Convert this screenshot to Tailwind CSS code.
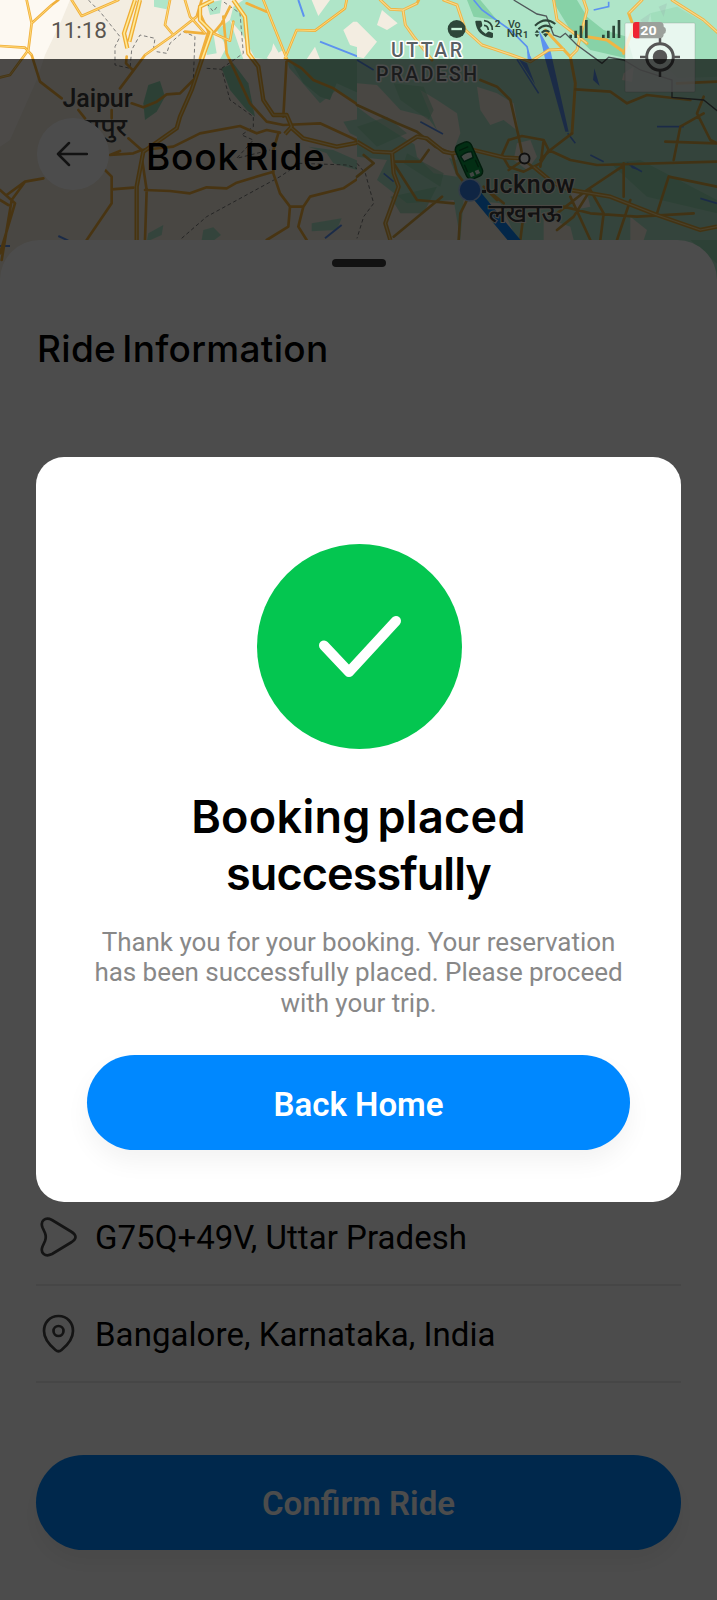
<!DOCTYPE html>
<html lang="en">
<head>
<meta charset="utf-8">
<meta name="viewport" content="width=device-width, initial-scale=1">
<title>Book Ride</title>
<script src="https://cdn.jsdelivr.net/npm/@tailwindcss/browser@4"></script>
</head>
<body class="bg-white">
<div class="relative h-[1600px] w-[717px] overflow-hidden bg-white font-[Roboto,'Noto_Sans',sans-serif] text-black">

  <!-- Map -->
  <svg class="absolute left-0 top-0" width="717" height="290" viewBox="0 0 717 290" fill="none">
    <rect width="717" height="290" fill="#f3ede1"/>
    <!-- western half, drawn at 3x -->
    <g transform="scale(.33333)">
      <path d="M0 0H210L185 60 135 165 110 240 30 420 0 440Z" fill="#fdf9f2"/>
      <g fill="#afe5c8">
        <path d="M462 0H506L500 28 462 20Z"/>
        <path d="M730 0H1100V330L1010 270 960 310 900 240 868 205 850 150 800 178 765 175 725 100 690 60 700 20Z"/>
        <path d="M650 90L690 60 730 178H660L680 140ZM620 10L665 0 660 40 630 45ZM625 120L640 100 650 160 620 165Z"/>
        <path d="M445 255L480 243 495 290 470 335 435 360 430 310Z" fill="#93d8b2"/>
        <path d="M665 205L700 190 745 250 765 350 740 330 690 270Z" fill="#93d8b2"/>
        <path d="M1030 365L1090 355V420L1050 400Z"/>
        <path d="M925 440L1000 450 1090 490V515L1000 490 980 460Z"/>
        <path d="M445 700L490 675 485 705 440 725Z"/><path d="M610 690L640 682 663 705 640 722 605 720Z"/>
        <path d="M935 670L1025 655 1010 690 935 694Z"/>
      </g>
      <path d="M870 180L910 250 960 290 990 300 1010 250 1100 290V180Z" fill="#93d8b2"/>
      <g fill="#f3ede1"><path d="M935 0H990L955 48Z"/><path d="M1030 90L1060 65H1100V150L1050 135Z"/><path d="M820 130L845 175H800L815 150ZM920 178L945 140 960 178Z"/></g>
      <g stroke="#5c92ef" stroke-width="6"><path d="M895 0L912 50M960 125L1080 172M975 715L1025 675M175 708L205 722M0 738H30"/></g>
      <g stroke="#656565" stroke-width="2.5" stroke-dasharray="11 8">
        <path d="M265 0L300 35 360 110 345 140V195L390 205 395 150 420 105 465 115 460 150M470 155L500 160 510 130 550 95 585 110 580 240M620 205L665 208 690 300 760 350V380L725 405 760 420 710 475 810 450M545 715L620 650 840 530 900 490 1040 495 1100 515M665 205L730 160 720 40 670 5M620 10L640 35 655 15"/>
      </g>
      <g stroke="#f0b03c" stroke-width="8" stroke-linejoin="round" stroke-linecap="round">
        <path d="M80 0L95 70 85 150 30 225 0 232M0 138L75 143 95 165 120 245 185 295M235 330L255 355M95 70L155 15 175 0M215 0L245 48 298 25 355 0M510 0L495 75 520 105 590 50 605 0M520 105L435 165 400 212M555 0L570 50 615 100M380 170L378 190 400 212 360 265M580 240L540 280 500 283 470 305 430 322 395 310M600 40L625 95 600 175M555 95L610 100M670 50L680 160 750 310 800 365 850 375M640 100L690 122 700 65M790 0L860 175 850 350M1040 0L1035 25 945 92 890 90 855 175 905 205 940 240 1000 265 1090 325M740 10L800 35M690 20L665 70 640 100M335 330V355M385 415L425 450 400 460 330 465 360 453M425 450L520 440 600 400 720 378 770 400 800 390 840 398M850 375L960 370 1090 430M435 570L510 573 570 580 620 562 680 565 710 548 820 515M425 470L440 570 435 720M315 510L335 530V610L260 720M335 568L400 563M0 570L45 610 0 760M75 545L20 585M130 535L75 545 35 600 5 780M0 600L25 615M820 520L840 580 870 620H910L930 590 1030 565 1090 525M870 620L865 680 800 720M910 620L895 680 920 720M835 400L820 450V520"/>
      </g>
      <g stroke="#efad34" stroke-width="13" stroke-linejoin="round">
        <path d="M405 0L372 100 382 145M420 0L388 125M640 0L600 20V60L635 95 605 180 575 270 540 350 530 385 430 455 410 560V725M700 0L735 50 745 160 775 200 790 300 820 345H860L875 380 855 402M870 380L910 415 1010 440 1090 425"/>
      </g>
      <g stroke="#ffea98" stroke-width="5" stroke-linejoin="round">
        <path d="M405 0L372 100 382 145M420 0L388 125M640 0L600 20V60L635 95 605 180M700 0L735 50 745 160 760 180"/>
      </g>
      <g stroke="#f8d88c" stroke-width="3.5" stroke-linejoin="round">
        <path d="M605 180L575 270 540 350 530 385 430 455 410 560V725M760 180L775 200 790 300 820 345H860L875 380 855 402M870 380L910 415 1010 440 1090 425"/>
      </g>
      <g stroke="#ffd876" stroke-width="3"><path d="M80 0L95 70 85 150 30 225 0 232M0 138L75 143 95 165M95 70L155 15M215 0L245 48 298 25 355 0M510 0L495 75 520 105 590 50M520 105L435 165M555 0L570 50 615 100M790 0L860 175M1040 0L1035 25 945 92 890 90 855 175M640 100L690 122 700 65"/></g>
    </g>
    <!-- eastern half, drawn at 3x -->
    <g transform="translate(357 0) scale(.33333)">
      <rect width="1080" height="870" fill="#afe5c8"/>
      <g fill="#f3ede1">
        <path d="M75 30L122 70 90 90 60 75ZM0 65L60 125 20 175 0 170Z"/>
        <path d="M0 250L60 255 130 330 210 350 240 390 290 420 300 480 220 460 150 420 40 350 0 320Z"/>
        <path d="M190 270L240 300 300 340 310 400 290 450 240 390ZM360 260L420 280 470 310 485 395 440 360 400 375 370 330Z"/>
        <path d="M0 470L90 480 60 540 150 610 290 600 310 720H0Z"/>
        <path d="M170 420L270 460 300 530 230 520 180 470Z"/>
        <path d="M480 430L520 420 540 470 510 510 470 480ZM640 570L690 580 700 620 650 630ZM800 220L830 200 825 245 795 240Z"/>
        <path d="M320 600L430 610 480 720H310ZM560 650L640 680 650 720H560ZM820 650L870 690 860 720H820Z"/>
      </g>
      <g fill="#87d2a7">
        <path d="M330 0H370L420 60 350 50ZM585 0H660L690 50 740 90 810 110 830 180 700 150 640 90Z"/>
        <path d="M110 250L200 260 230 330 215 360 130 300ZM0 380L90 350 150 400 60 440ZM150 460L260 520 250 560 140 490Z" opacity=".55"/>
        <path d="M880 40L960 20 1080 90V230L960 235 900 170Z" opacity=".35"/>
        <path d="M760 490L850 480 1080 600V640L870 590ZM100 590L240 560 200 640 130 640ZM1000 720H1090V800Z" opacity=".6"/>
      </g>
      <path d="M850 60L880 40 870 80ZM905 20L930 10 920 50Z" opacity=".25" fill="#9aa"/>
      <g stroke="#5c92ef" stroke-width="5"><path d="M350 0L375 30 460 90 510 140 520 180M480 178L545 280M755 5V20L710 30M190 365L258 402M632 400L655 430M900 380H980M700 465L740 485M810 490L855 515M80 520L110 545M1030 595L1080 610M0 180L50 210"/></g>
      <path d="M545 90L580 150 635 395 625 395 565 180Z" fill="#5c92ef"/>
      <path d="M510 150L525 178H512ZM712 205L728 258 708 240ZM485 178L510 190 535 255ZM810 485L850 512 825 505Z" fill="#5c92ef"/>
      <path d="M0 490L25 520 50 610 20 650 0 715" stroke="#656565" stroke-width="2.5" stroke-dasharray="11 8"/>
      <g stroke="#efb544" stroke-width="9" stroke-linejoin="round" stroke-linecap="round">
        <path d="M70 0L100 28 138 30 180 10 185 0M138 30L145 75 170 110 225 180M260 0L300 15 325 90 375 135 450 160 520 185 575 150 620 148M590 0L600 60 690 130M680 0L690 30 660 150 640 170M565 90L640 170 655 250 645 400M855 0L815 40 830 80 800 160M945 0L1040 60 1090 105M690 110L750 120 800 155"/>
      </g>
      <g stroke="#d9a943" stroke-width="8" stroke-linejoin="round" stroke-linecap="round">
        <path d="M370 240L420 260 460 300 485 410 495 460M645 400L580 450 550 480M655 268L760 275 810 310 870 285 1000 300M960 250L1080 245M1040 290L1020 340 1060 420 1080 430M1040 340L970 380 950 480M925 425L1080 430M455 420L495 408 560 420 575 450 640 480 720 495 1080 485M455 420L435 465 455 500 500 515 550 490 575 450M495 475L550 520M560 420L550 500M800 490V590M795 500L690 570 600 640M935 530L900 640M935 530L1080 560M640 590L700 720M820 600L780 720M620 620L700 640 840 650 1010 640M700 570L740 640 730 720M600 690L650 650 700 570"/>
        <path d="M0 315L120 370 180 395 235 440 285 460M110 485L190 485 215 450M110 490L180 600 290 610M255 590L110 710M285 460L300 520 330 560M350 560L310 640 305 720M420 600L380 560 440 610M500 640L490 720M345 450L285 460M455 510L500 480M0 530L50 490 20 465"/>
      </g>
      <g stroke="#e2ac42" stroke-width="13" stroke-linejoin="round"><path d="M0 425L50 455 105 458 180 410 210 415 260 455 285 460 350 450 440 472 490 475M530 500L590 550 640 570 760 590 900 645 1030 690 1080 680M105 458L110 520 125 560 85 670 100 720"/></g>
      <g stroke="#f8d88c" stroke-width="3.5" stroke-linejoin="round"><path d="M0 425L50 455 105 458 180 410 210 415 260 455 285 460 350 450 440 472 490 475M530 500L590 550 640 570 760 590 900 645 1030 690 1080 680M105 458L110 520 125 560 85 670 100 720M70 0L100 28 138 30 180 10M138 30L145 75 170 110 225 180M260 0L300 15 325 90 375 135 450 160 520 185 575 150 620 148M590 0L600 60 690 130M680 0L690 30 660 150 640 170M855 0L815 40M945 0L1040 60 1090 105"/></g>
      <path d="M470 0L540 42 568 48 590 105 610 112 625 100 660 135 735 190 755 172 800 180 850 210 945 240V292L1040 300 1090 340" stroke="#50585a" stroke-width="4"/>
    </g>
    <!-- map labels -->
    <g fill="#5a5f63" stroke="#fff" stroke-width="3" stroke-linejoin="round" style="paint-order:stroke" font-family="Roboto, 'Noto Sans', sans-serif">
      <g font-size="19.5" font-weight="500"><text x="391" y="56.7" textLength="71">UTTAR</text><text x="376" y="80.7" textLength="101">PRADESH</text></g>
      <g fill="#3c3c3c" stroke="#f3ede1" stroke-width="2" font-weight="500" font-size="25"><text x="62.500" y="106.500" textLength="70">Jaipur</text><text x="485" y="192.500" textLength="89.500">ucknow</text></g>
      <text x="64" y="136" fill="#3c3c3c" stroke="none" font-size="25" font-weight="500" textLength="63" lengthAdjust="spacingAndGlyphs">जयपुर</text>
    </g>
    <path d="M474 192L514 240L520 247" stroke="#0b84f3" stroke-width="10"/>
    <text x="488.500" y="222" font-size="25.500" font-weight="500" fill="#3c3c3c" stroke="#f3ede1" stroke-width="2" style="paint-order:stroke" textLength="73" lengthAdjust="spacingAndGlyphs" font-family="'Noto Sans', sans-serif">लखनऊ</text>
    <rect x="482" y="190" width="4" height="3" fill="#3c3c3c"/>
    <circle cx="524.500" cy="158.500" r="5" fill="#fff" stroke="#333" stroke-width="2"/>
    <!-- car -->
    <g transform="translate(469 160.500) rotate(-24)">
      <rect x="-8.500" y="-18.500" width="17" height="37" rx="5" fill="#0b9c45" stroke="#075f2b" stroke-width="1.500"/>
      <path d="M-6-7Q0-10 6-7L5-1H-5Z" fill="#dff1e5" stroke="#063" stroke-width="1.500"/>
      <path d="M-6 2V10M6 2V10M-5-13H5" stroke="#075f2b" stroke-width="1.500"/>
      <path d="M-5 12H-1V16H-5ZM1 12H5V16H1Z" fill="#d8ecdf"/>
    </g>
    <circle cx="470" cy="190" r="11" fill="#347de0" stroke="#a9c6ee" stroke-width="1.500"/>
    <!-- locate button -->
    <rect x="625" y="23" width="70" height="69" rx="1" fill="#fff" fill-opacity=".76" stroke="#888" stroke-opacity=".3"/>
    <g stroke="#565656" stroke-width="2.500"><circle cx="660" cy="57" r="13.300" stroke-width="3"/><path d="M660 37V44M660 70V77M640 57H647M673 57H680"/><circle cx="660" cy="57" r="6" fill="#565656"/></g>
  </svg>

  <!-- App page -->
  <div class="relative flex h-full flex-col">
    <header class="flex h-[240px] items-start pl-[37px] pt-[118px]">
      <button class="flex size-[72px] shrink-0 items-center justify-center rounded-full bg-white pr-[2px]" aria-label="Back">
        <svg width="32" height="28" viewBox="0 0 32 28" fill="none" stroke="#3c3c3c" stroke-width="2.500" stroke-linecap="round" stroke-linejoin="round"><path d="M31 14H2M13 3L2 14 13 25"/></svg>
      </button>
      <h1 class="ml-[37px] mt-[17px] whitespace-nowrap font-[Inter,sans-serif] text-[37px] font-medium leading-[44px] tracking-[0.8px] [word-spacing:-5px]">Book Ride</h1>
    </header>

    <main class="flex flex-1 flex-col rounded-t-[40px] bg-white px-[36px]">
      <div class="mx-auto mt-[18.500px] h-[8px] w-[54px] rounded-full bg-[#3c3c3c]"></div>
      <h2 class="ml-[1px] mt-[60.500px] whitespace-nowrap font-[Inter,sans-serif] text-[37px] font-medium leading-[44px] tracking-[0.3px] [word-spacing:-4px]">Ride Information</h2>
      <div class="mt-[818px] flex h-[97px] items-center gap-[17px] border-b-2 border-[#ececec]">
        <svg class="ml-[3px] shrink-0" width="39" height="40" viewBox="0 0 39 40" fill="none" stroke="#444" stroke-width="2.700" stroke-linejoin="round"><path d="M13 3L32 14.500Q41 20 32 25.500L13 37C6 40.500 1 36 3.500 29.500L6 24Q7.500 20 6 16L3.500 10.500C1 4 6-.500 13 3Z"/></svg>
        <span class="pt-[2px] text-[33px] leading-[40px] tracking-[0.04px]">G75Q+49V, Uttar Pradesh</span>
      </div>
      <div class="flex h-[97px] items-center gap-[17px] border-b-2 border-[#ececec]">
        <svg class="ml-[3px] shrink-0" width="39" height="40" viewBox="0 0 39 40" fill="none" stroke="#444" stroke-width="2.700"><path d="M19.500 2C10.500 2 5 9 5 17C5 25 11 31.500 16.500 36Q19.500 38.500 22.500 36C28 31.500 34 25 34 17C34 9 28.500 2 19.500 2Z"/><circle cx="19.500" cy="17" r="5"/></svg>
        <span class="pt-[2px] text-[33px] leading-[40px] tracking-[0.06px]">Bangalore, Karnataka, India</span>
      </div>
      <button class="mt-[72px] h-[95px] w-full rounded-full bg-[#0088ff] pt-[3px] text-[33px] font-semibold text-white shadow-[0_12px_24px_rgba(0,0,0,0.06)]">Confirm Ride</button>
    </main>
  </div>

  <!-- Scrim and dialog -->
  <div class="absolute inset-x-0 bottom-0 top-[59px] flex items-center justify-center bg-black/70">
    <section role="dialog" class="flex h-[745.500px] w-[645px] flex-col items-center rounded-[28px] bg-white px-[51px] pt-[87px]">
      <svg class="ml-[1px] shrink-0" width="205" height="205" viewBox="0 0 205 205" fill="none"><circle cx="102.500" cy="102.500" r="102.500" fill="#04c650"/><path d="M67 101.500L92 128 139 77" stroke="#fff" stroke-width="10" stroke-linecap="round" stroke-linejoin="round"/></svg>
      <h2 class="mt-[39px] text-center font-[Inter,sans-serif] text-[45px] font-semibold leading-[57px] [word-spacing:-5px]"><span class="tracking-[0.3px]">Booking placed</span><br><span class="tracking-[-0.95px]">successfully</span></h2>
      <p class="mt-[25px] whitespace-nowrap text-center text-[26px] leading-[30.5px] tracking-[-0.05px] text-[#888]">Thank you for your booking. Your reservation<br>has been successfully placed. Please proceed<br>with your trip.</p>
      <button class="mt-[37px] h-[95px] w-full shrink-0 rounded-full bg-[#0088ff] pt-[3px] text-[33px] font-semibold text-white shadow-[0_12px_24px_rgba(0,0,0,0.05)]">Back Home</button>
    </section>
  </div>

  <!-- Status bar -->
  <svg class="absolute left-0 top-0" width="717" height="59" viewBox="0 0 717 59" fill="none" font-family="Roboto, sans-serif">
    <text x="51" y="37.500" font-size="22.500" fill="#5a5650" textLength="56">11:18</text>
    <g transform="translate(357 0) scale(.33333)" fill="#2d4639" stroke="#2d4639">
      <circle cx="299" cy="87" r="27" stroke="none"/><path d="M283 87H315" stroke="#c9f3da" stroke-width="7"/>
      <path d="M355 66Q354 62 358 62H370Q373 62 374 66L376 76Q376 79 369 84 375 95 386 101L393 95Q395 94 398 95L406 98Q409 99 408 103V110Q408 114 403 114 360 108 355 66Z" stroke="none"/>
      <path d="M381 62Q406 64 406 90M381 76Q393 77 394 90" fill="none" stroke-width="5"/>
      <g stroke="none" font-weight="700"><text x="413" y="80" font-size="25" textLength="17" lengthAdjust="spacingAndGlyphs">2</text><text x="453" y="84" font-size="31" font-weight="500" textLength="38" lengthAdjust="spacingAndGlyphs">Vo</text><text x="449" y="111" font-size="32" font-weight="500" textLength="47" lengthAdjust="spacingAndGlyphs">NR</text><text x="498" y="114" font-size="28">1</text></g>
      <path d="M534 77Q564 48 595 72M544 88Q565 68 586 84M554 98Q566 87 577 96" fill="none" stroke-width="6"/>
      <path d="M558 102Q566 97 574 102L566 112ZM533 98L540 89 547 98ZM533 103H547L540 112Z" stroke="none"/>
      <path d="M641 114V104M656 114V92M672 114V77M688 114V60M739 114V104M754 114V92M770 114V77M786 114V60" stroke-width="8"/>
      <path d="M837 66H908Q920 66 920 78V80Q927 82 927 91T920 102Q920 115 908 115H837Q828 115 828 106V75Q828 66 837 66Z" fill="#9ba09b" stroke="none"/>
      <path d="M837 66H847V115H837Q828 115 828 106V75Q828 66 837 66Z" fill="#ef2332" stroke="none"/>
      <text x="850" y="104" font-size="38" font-weight="700" fill="#fff" stroke="none" textLength="49" lengthAdjust="spacingAndGlyphs">20</text>
    </g>
  </svg>
</div>
</body>
</html>
